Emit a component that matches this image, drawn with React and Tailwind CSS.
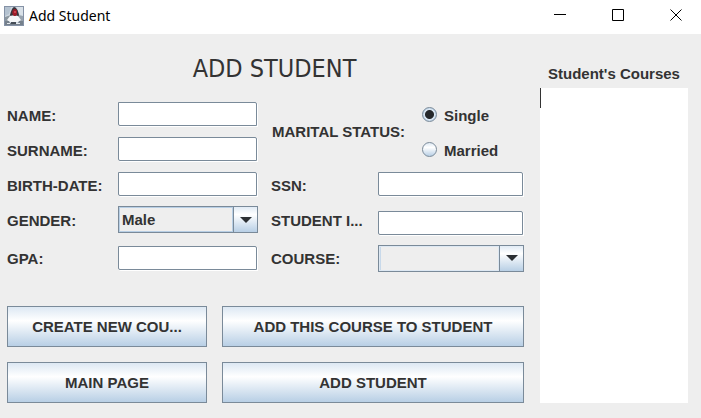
import React from "react";

const fieldClass =
  "block h-6 w-full min-w-0 rounded-none rounded-tr-[2px] rounded-bl-[2px] border border-[#7a8a99] bg-white px-1 text-[15px] font-bold shadow-[1px_1px_0_#ffffff] outline-none";

function TextField({ id, label, className = "pb-[3px]" }) {
  return (
    <>
      <label htmlFor={id} className="truncate">
        {label}
      </label>
      <div className={"pr-px " + className}>
        <input id={id} type="text" className={fieldClass} />
      </div>
    </>
  );
}

function Combo({ id, label, options, light = false }) {
  return (
    <>
      <label htmlFor={id} className="truncate">
        {label}
      </label>
      <div className="pb-[2px]">
        <div className="relative">
          <select
            id={id}
            className={
              "block h-[27px] w-full appearance-none rounded-none border border-[#7a8a99] bg-[#eeeeee] pr-7 pl-[3px] text-[15px] leading-5 font-bold outline-none " +
              (light
                ? "shadow-[inset_1px_1px_0_#dde8f3,inset_-1px_-1px_0_#dde8f3,inset_2px_0_0_#c8d9ea]"
                : "shadow-[inset_1px_1px_0_#b8cfe5,inset_-1px_-1px_0_#b8cfe5]")
            }
          >
            {options.map((o) => (
              <option key={o}>{o}</option>
            ))}
          </select>
          <span
            className={
              "pointer-events-none absolute inset-y-px right-px flex w-6 items-center justify-center border-l border-[#7a8a99] bg-linear-to-b from-[#e1ebf5] via-white via-30% to-[#b8cfe5] " +
              (light
                ? "shadow-[-1px_0_0_#dde8f3]"
                : "shadow-[-1px_0_0_#b8cfe5]")
            }
          >
            <svg width="12" height="6" viewBox="0 0 12 6" aria-hidden="true">
              <path d="M0 0h12L6 6z" fill="#2b2f33" />
            </svg>
          </span>
        </div>
      </div>
    </>
  );
}

function Radio({ label, defaultChecked }) {
  return (
    <label className="flex h-[35px] items-center gap-[7px]">
      <span className="flex pb-[2px]">
        <input
          type="radio"
          name="marital"
          defaultChecked={defaultChecked}
          className="size-[15px] appearance-none rounded-full border border-[#7a8a99] bg-linear-to-b from-[#dfeaf4] via-white via-35% to-[#b8cfe5] checked:bg-[radial-gradient(circle,#25282b_0_4px,#dce8f3_5px,#b8cfe5_7px)]"
        />
      </span>
      {label}
    </label>
  );
}

function Button({ children }) {
  return (
    <button
      type="button"
      className="h-[41px] min-w-0 truncate border border-[#7a8a99] bg-linear-to-b from-[#dde8f3] via-white via-35% to-[#b8cfe5] px-2"
    >
      {children}
    </button>
  );
}

function JavaIcon() {
  return (
    <svg width="20" height="20" viewBox="0 0 20 20" aria-hidden="true">
      <rect width="20" height="20" fill="#8592a6" />
      <rect x="1" y="1" width="18" height="18" fill="#cdd6df" />
      <path d="M1 1h6L5 8 1 10z" fill="#b4c2d0" />
      <path d="M13 1h6v9l-4-2z" fill="#d9e1e8" />
      <path d="M1 11l6-2v5l-3 1H1z" fill="#8b969f" />
      <path d="M14 9l5 1v5h-4z" fill="#98a3ae" />
      <path d="M10 1c2 0 4 3 5 8l-1 2H7l-1-2C7 5 8 2 10 1z" fill="#34343b" />
      <path d="M6 10c3-1 6-1 8 0l3 4-3 2H6l-3-2z" fill="#f4f6f8" />
      <path d="M9 4c1-2 4-1 4 1v3c0 2-3 3-4 1s-1-3 0-5z" fill="#9c1c29" />
      <path d="M10 5h2v2h-2z" fill="#c9414c" />
      <path d="M1 15h4l1 2h8l1-2h4v4H1z" fill="#75808c" />
      <path d="M3 17h3v1H3zM12 17h4v1h-4z" fill="#e4e9ee" />
      <path d="M7 16h5v2H7z" fill="#454d57" />
    </svg>
  );
}

function TitleBar() {
  const control = "flex h-[30px] w-[46px] items-center justify-center";
  const stroke = { fill: "none", stroke: "#000000", strokeWidth: 1 };
  return (
    <header className="flex h-[34px] items-start bg-white pl-1 text-black">
      <div className="flex h-[31px] flex-1 items-center gap-[5px]">
        <JavaIcon />
        <span className="font-['Noto_Sans',sans-serif] text-[14px] leading-5">
          Add Student
        </span>
      </div>
      <div className="flex gap-3 pr-[2px]">
        <button type="button" aria-label="Minimize" className={control}>
          <svg width="12" height="12" {...stroke}>
            <path d="M0 5.5h12" />
          </svg>
        </button>
        <button type="button" aria-label="Maximize" className={control}>
          <svg width="12" height="12" {...stroke}>
            <path d="M.5.5h11v11H.5z" />
          </svg>
        </button>
        <button type="button" aria-label="Close" className={control}>
          <svg width="12" height="12" {...stroke}>
            <path d="M.5.5l11 11M11.5.5l-11 11" />
          </svg>
        </button>
      </div>
    </header>
  );
}

export default function App() {
  return (
    <div className="min-h-screen bg-[#eeeeee] font-['Liberation_Sans',Arial,sans-serif] text-[15px] leading-5 font-bold text-[#333333]">
      <div className="font-normal">
        <TitleBar />
      </div>
      <main className="grid grid-cols-[517fr_148fr] gap-4 pr-[13px] pb-[15px] pl-[7px]">
        <form>
          <h1 className="flex h-16 items-center justify-center pt-[6px] pl-[18px] font-['DejaVu_Sans_Condensed','DejaVu_Sans',sans-serif] text-[25px] leading-8 font-normal">
            ADD STUDENT
          </h1>
          <div className="grid grid-cols-[251fr_253fr] gap-[13px]">
            <div className="grid grid-cols-[111fr_140fr] grid-rows-[35px_35px_35px_35px_42px] items-center">
              <TextField id="name" label="NAME:" />
              <TextField id="surname" label="SURNAME:" />
              <TextField id="birth" label="BIRTH-DATE:" />
              <Combo id="gender" label="GENDER:" options={["Male", "Female"]} />
              <TextField id="gpa" label="GPA:" />
            </div>
            <div className="grid grid-cols-[107fr_146fr] grid-rows-[70px_35px_35px_42px] items-center">
              <fieldset className="col-span-2 flex items-center justify-between">
                <span
                  id="marital-label"
                  className="pb-[2px] pl-px whitespace-nowrap"
                >
                  MARITAL STATUS:
                </span>
                <div
                  role="radiogroup"
                  aria-labelledby="marital-label"
                  className="w-[102px]"
                >
                  <Radio label="Single" defaultChecked />
                  <Radio label="Married" />
                </div>
              </fieldset>
              <TextField id="ssn" label="SSN:" />
              <TextField
                id="student-id"
                label="STUDENT I..."
                className="self-end pb-[3px]"
              />
              <Combo id="course" label="COURSE:" options={[""]} light />
            </div>
          </div>
          <div className="mt-[26px] grid grid-cols-[200fr_302fr] gap-[15px]">
            <Button>CREATE NEW COU...</Button>
            <Button>ADD THIS COURSE TO STUDENT</Button>
            <Button>MAIN PAGE</Button>
            <Button>ADD STUDENT</Button>
          </div>
        </form>
        <section className="flex flex-col">
          <label
            htmlFor="courses"
            className="flex h-[54px] items-end justify-center pb-1 whitespace-nowrap"
          >
            Student's Courses
          </label>
          <div className="relative flex flex-1">
            <textarea
              id="courses"
              className="w-full flex-1 resize-none bg-white px-px outline-none"
            />
            <span className="absolute top-0 left-0 h-5 w-px bg-[#333333]" />
          </div>
        </section>
      </main>
    </div>
  );
}
